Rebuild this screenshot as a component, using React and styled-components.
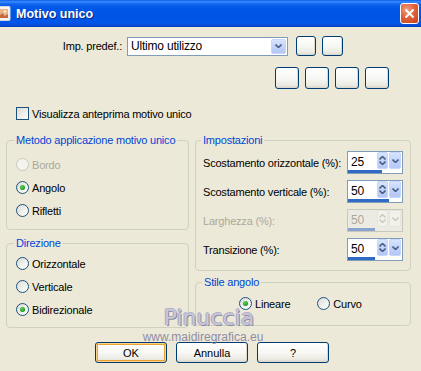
import styled, { createGlobalStyle } from "styled-components";

const GlobalStyle = createGlobalStyle`
  html, body {
    margin: 0;
    padding: 0;
    background: #ece9d8;
  }
  body {
    font-family: "Liberation Sans", Arial, sans-serif;
    font-size: 11px;
    letter-spacing: -0.2px;
    color: #000;
  }
`;

const Window = styled.div`
  position: relative;
  width: 421px;
  height: 371px;
  background: #ece9d8;
  overflow: hidden;
  display: flex;
  flex-direction: column;
`;

const TitleBar = styled.div`
  height: 27px;
  flex-shrink: 0;
  display: flex;
  align-items: center;
  background: linear-gradient(
    180deg,
    #0a5fe6 0%,
    #3b8dff 7%,
    #1165f0 14%,
    #0058e8 30%,
    #0054e3 60%,
    #0056ea 85%,
    #0a4fd8 93%,
    #0038b8 100%
  );
`;

const TitleText = styled.span`
  margin-left: 5px;
  font-family: "Liberation Sans", Arial, sans-serif;
  font-weight: bold;
  font-size: 12.5px;
  letter-spacing: 0;
  color: #fff;
  text-shadow: 1px 1px 0 #0a2a8a;
`;

const CloseButton = styled.div`
  margin-left: auto;
  margin-right: 2px;
  width: 19px;
  height: 21px;
  box-sizing: border-box;
  border: 1px solid #fff;
  border-radius: 3px;
  background: radial-gradient(circle at 35% 30%, #f0a080 0%, #e2623b 45%, #c93f1c 100%);
  display: flex;
  align-items: center;
  justify-content: center;
`;

const Content = styled.div`
  display: flex;
  flex-direction: column;
`;

const PresetRow = styled.div`
  margin-top: 9px;
  height: 20px;
  display: flex;
  align-items: center;
`;

const PresetLabel = styled.span`
  width: 122px;
  padding-right: 5px;
  text-align: right;
  box-sizing: content-box;
`;

const Select = styled.div`
  width: 161px;
  height: 19px;
  box-sizing: border-box;
  border: 1px solid #7f9db9;
  background: #fff;
  display: flex;
  align-items: center;
  padding: 1px 1px 1px 3px;
  font-size: 12px;
`;

const SelectText = styled.span`
  flex: 1;
`;

const ArrowButton = styled.div`
  width: ${(p) => p.$w || 15}px;
  height: 100%;
  box-sizing: border-box;
  background: ${(p) =>
    p.$disabled
      ? "#f2f1ea"
      : "linear-gradient(180deg, #d8e4fd 0%, #c1d3fb 50%, #b4c8f6 100%)"};
  border: 1px solid ${(p) => (p.$disabled ? "#e6e4dc" : "#c6d6fc")};
  border-radius: 2px;
  display: flex;
  flex-direction: column;
  align-items: center;
  justify-content: center;
  gap: 1px;
`;

const ButtonGroup = styled.div`
  display: flex;
  gap: ${(p) => p.$gap}px;
  margin-left: ${(p) => p.$ml || 0}px;
`;

const XpButton = styled.button`
  width: ${(p) => p.$w}px;
  height: ${(p) => p.$h}px;
  box-sizing: border-box;
  padding: 0;
  border: 1px solid #003c74;
  border-radius: 3px;
  background: linear-gradient(180deg, #ffffff 0%, #f6f6f2 55%, #ebeae3 85%, #d8d6cc 100%);
  box-shadow: ${(p) =>
    p.$focus
      ? "inset 0 0 0 1px #fbd38b, inset 0 0 0 2px #eaa231"
      : "inset -1px -1px 0 #dcd8cc"};
  font-family: "Liberation Sans", Arial, sans-serif;
  font-size: 11px;
  color: #000;
`;

const IconRow = styled.div`
  margin-top: 11px;
  height: 22px;
  padding-left: 275px;
  display: flex;
  gap: 6px;
`;

const CheckRow = styled.label`
  margin-top: 18px;
  padding-left: 16px;
  height: 13px;
  display: flex;
  align-items: center;
  gap: 3px;
`;

const CheckBox = styled.span`
  width: 13px;
  height: 13px;
  box-sizing: border-box;
  border: 1px solid #1c5180;
  background: linear-gradient(135deg, #dcdcd7 0%, #f0f0ec 60%, #ffffff 100%);
`;

const Columns = styled.div`
  margin-top: 14px;
  padding-left: 6px;
  display: flex;
  gap: 6px;
  align-items: flex-start;
`;

const Column = styled.div`
  width: ${(p) => p.$w}px;
  display: flex;
  flex-direction: column;
  gap: ${(p) => p.$gap}px;
`;

const Group = styled.fieldset`
  margin: 0;
  padding: 0;
  min-width: 0;
  height: ${(p) => p.$h}px;
  box-sizing: border-box;
  border: 1px solid #d0d0bf;
  border-radius: 4px;
`;

const Legend = styled.legend`
  margin-left: ${(p) => p.$ml}px;
  padding: 0 2px;
  line-height: 13px;
  color: #0046d5;
`;

const RadioList = styled.div`
  display: flex;
  flex-direction: ${(p) => (p.$row ? "row" : "column")};
  gap: ${(p) => (p.$row ? 27 : 0)}px;
  padding-top: ${(p) => p.$pt}px;
  padding-left: ${(p) => p.$pl}px;
`;

const RadioRow = styled.label`
  height: 23px;
  display: flex;
  align-items: center;
  gap: 3px;
  color: ${(p) => (p.$disabled ? "#aca899" : "#000")};
`;

const RadioCircle = styled.span`
  width: 13px;
  height: 13px;
  box-sizing: border-box;
  border-radius: 50%;
  border: 1px solid ${(p) => (p.$disabled ? "#cac8bb" : "#1c5180")};
  background: ${(p) =>
    p.$disabled
      ? "#f4f3ee"
      : "linear-gradient(135deg, #dcdcd7 0%, #f2f2ee 60%, #ffffff 100%)"};
  display: flex;
  align-items: center;
  justify-content: center;

  &::after {
    content: "";
    display: ${(p) => (p.$checked ? "block" : "none")};
    width: 5px;
    height: 5px;
    border-radius: 50%;
    background: radial-gradient(circle at 40% 35%, #5fd35f 0%, #21a121 60%, #0d7f0d 100%);
  }
`;

const SpinList = styled.div`
  display: flex;
  flex-direction: column;
  gap: 6px;
  padding: 4px 7px 0 7px;
`;

const SpinRow = styled.div`
  height: 23px;
  display: flex;
  align-items: center;
  justify-content: space-between;
  color: ${(p) => (p.$disabled ? "#aca899" : "#000")};
`;

const SpinBox = styled.div`
  width: 56px;
  height: 23px;
  box-sizing: border-box;
  border: 1px solid ${(p) => (p.$disabled ? "#c9c7ba" : "#7f9db9")};
  background: ${(p) => (p.$disabled ? "#ebebe4" : "#fff")};
  display: flex;
  flex-direction: column;
`;

const SpinTop = styled.div`
  height: 17px;
  display: flex;
  gap: 1px;
  padding-right: 1px;
`;

const SpinValue = styled.span`
  flex: 1;
  padding-left: 3px;
  padding-top: 3px;
  font-size: 12px;
  line-height: 14px;
`;

const SpinBar = styled.div`
  margin-top: 1px;
  height: 3px;
  background: ${(p) => (p.$disabled ? "#8aa2cf" : "#316ac5")};
`;

const Watermark = styled.div`
  position: absolute;
  left: 143px;
  top: 305px;
  width: 120px;
  display: flex;
  flex-direction: column;
  align-items: center;
  pointer-events: none;
`;

const WatermarkName = styled.span`
  font-family: "DejaVu Sans", sans-serif;
  font-size: 22px;
  line-height: 25px;
  letter-spacing: 0;
  color: #c9c7d9;
  text-shadow: 1px 1px 0 #8d8ba6, -1px 0 0 #a9a7bf, 0 -1px 0 #b3b1c6;
  margin-left: 12px;
  margin-bottom: 1px;
`;

const WatermarkUrl = styled.span`
  font-family: "Liberation Sans", Arial, sans-serif;
  font-size: 12px;
  line-height: 12px;
  letter-spacing: 0;
  color: #8f8da6;
`;

const Footer = styled.div`
  margin-top: 14px;
  padding-left: 95px;
  display: flex;
  gap: 9px;
`;

const Chevron = ({ up, color = "#4d6185" }) => (
  <svg width="7" height="4" viewBox="0 0 7 4">
    <path
      d={up ? "M0.5 3.5 L3.5 0.5 L6.5 3.5" : "M0.5 0.5 L3.5 3.5 L6.5 0.5"}
      fill="none"
      stroke={color}
      strokeWidth="1.6"
    />
  </svg>
);

const spins = [
  { label: "Scostamento orizzontale (%):", value: 25, bar: 34 },
  { label: "Scostamento verticale (%):", value: 50, bar: 41 },
  { label: "Larghezza (%):", value: 50, bar: 27, disabled: true },
  { label: "Transizione (%):", value: 50, bar: 27 },
];

const Radio = ({ label, checked, disabled }) => (
  <RadioRow $disabled={disabled}>
    <RadioCircle $checked={checked} $disabled={disabled} />
    {label}
  </RadioRow>
);

export default function App() {
  return (
    <Window>
      <GlobalStyle />
      <TitleBar>
        <svg width="11" height="15" viewBox="0 0 11 15">
          <rect x="-4" y="0.5" width="14" height="14" rx="1" fill="#f4f4f4" stroke="#d8d8d8" />
          <rect x="-2" y="3" width="10" height="9" fill="#e8b38a" />
          <path d="M-2 12 L2 7 L5 10 L8 8 L8 12 Z" fill="#c8673a" />
          <circle cx="5" cy="5.5" r="1.3" fill="#fff2c0" />
        </svg>
        <TitleText>Motivo unico</TitleText>
        <CloseButton>
          <svg width="11" height="11" viewBox="0 0 11 11">
            <path d="M1.5 1.5 L9.5 9.5 M9.5 1.5 L1.5 9.5" stroke="#fff" strokeWidth="2" />
          </svg>
        </CloseButton>
      </TitleBar>

      <Content>
        <PresetRow>
          <PresetLabel>Imp. predef.:</PresetLabel>
          <Select>
            <SelectText>Ultimo utilizzo</SelectText>
            <ArrowButton $w={15}>
              <Chevron />
            </ArrowButton>
          </Select>
          <ButtonGroup $gap={6} $ml={8}>
            <XpButton $w={20} $h={20} />
            <XpButton $w={21} $h={20} />
          </ButtonGroup>
        </PresetRow>

        <IconRow>
          <XpButton $w={24} $h={22} />
          <XpButton $w={24} $h={22} />
          <XpButton $w={24} $h={22} />
          <XpButton $w={24} $h={22} />
        </IconRow>

        <CheckRow>
          <CheckBox />
          Visualizza anteprima motivo unico
        </CheckRow>

        <Columns>
          <Column $w={183} $gap={7}>
            <Group $h={96}>
              <Legend $ml={7}>Metodo applicazione motivo unico</Legend>
              <RadioList $pt={6} $pl={9}>
                <Radio label="Bordo" disabled />
                <Radio label="Angolo" checked />
                <Radio label="Rifletti" />
              </RadioList>
            </Group>
            <Group $h={91}>
              <Legend $ml={7}>Direzione</Legend>
              <RadioList $pt={2} $pl={9}>
                <Radio label="Orizzontale" />
                <Radio label="Verticale" />
                <Radio label="Bidirezionale" checked />
              </RadioList>
            </Group>
          </Column>

          <Column $w={216} $gap={5}>
            <Group $h={137}>
              <Legend $ml={5}>Impostazioni</Legend>
              <SpinList>
                {spins.map((s) => (
                  <SpinRow key={s.label} $disabled={s.disabled}>
                    <span>{s.label}</span>
                    <SpinBox $disabled={s.disabled}>
                      <SpinTop>
                        <SpinValue>{s.value}</SpinValue>
                        <ArrowButton $w={11} $disabled={s.disabled}>
                          <Chevron up color={s.disabled ? "#cfcdc2" : "#4d6185"} />
                          <Chevron color={s.disabled ? "#cfcdc2" : "#4d6185"} />
                        </ArrowButton>
                        <ArrowButton $w={12} $disabled={s.disabled}>
                          <Chevron color={s.disabled ? "#cfcdc2" : "#4d6185"} />
                        </ArrowButton>
                      </SpinTop>
                      <SpinBar $disabled={s.disabled} style={{ width: s.bar }} />
                    </SpinBox>
                  </SpinRow>
                ))}
              </SpinList>
            </Group>
            <Group $h={50}>
              <Legend $ml={6}>Stile angolo</Legend>
              <RadioList $row $pt={3} $pl={43}>
                <Radio label="Lineare" checked />
                <Radio label="Curvo" />
              </RadioList>
            </Group>
          </Column>
        </Columns>

        <Footer>
          <XpButton $w={72} $h={21} $focus>
            OK
          </XpButton>
          <XpButton $w={72} $h={21}>
            Annulla
          </XpButton>
          <XpButton $w={72} $h={21}>
            ?
          </XpButton>
        </Footer>
      </Content>

      <Watermark>
        <WatermarkName>Pinuccia</WatermarkName>
        <WatermarkUrl>www.maidiregrafica.eu</WatermarkUrl>
      </Watermark>
    </Window>
  );
}
